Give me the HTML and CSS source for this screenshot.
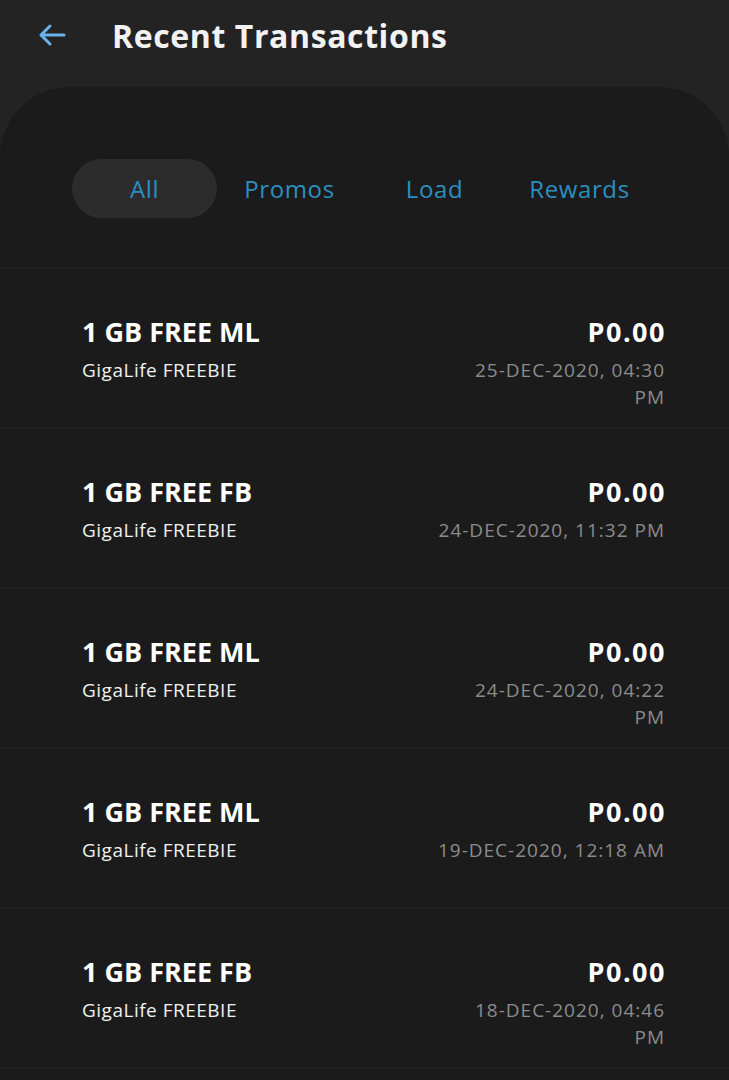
FILE: index.html
```html
<!DOCTYPE html>
<html lang="en">
<head>
    <meta charset="UTF-8">
    <meta name="viewport" content="width=device-width, initial-scale=1.0">
    <title>Recent Transactions</title>
    <link rel="stylesheet" href="styles.css">
</head>
<body>
    <header class="top-bar">
        <button class="back-btn" aria-label="Back">
            <svg width="30" height="24" viewBox="0 0 30 24">
                <path d="M27 12H4M13 3L4 12l9 9" fill="none" stroke="#6cb2ec" stroke-width="3" stroke-linecap="round" stroke-linejoin="round"/>
            </svg>
        </button>
        <h1>Recent Transactions</h1>
    </header>

    <main class="card">
        <nav class="tabs">
            <span class="tab active">All</span>
            <span class="tab">Promos</span>
            <span class="tab">Load</span>
            <span class="tab">Rewards</span>
        </nav>

        <ul class="tx-list">
            <li class="tx">
                <div class="tx-left">
                    <div class="tx-name">1 GB FREE ML</div>
                    <div class="tx-sub">GigaLife FREEBIE</div>
                </div>
                <div class="tx-right">
                    <div class="tx-amount">P0.00</div>
                    <div class="tx-date">25-DEC-2020, 04:30<br>PM</div>
                </div>
            </li>
            <li class="tx">
                <div class="tx-left">
                    <div class="tx-name">1 GB FREE FB</div>
                    <div class="tx-sub">GigaLife FREEBIE</div>
                </div>
                <div class="tx-right">
                    <div class="tx-amount">P0.00</div>
                    <div class="tx-date">24-DEC-2020, 11:32 PM</div>
                </div>
            </li>
            <li class="tx">
                <div class="tx-left">
                    <div class="tx-name">1 GB FREE ML</div>
                    <div class="tx-sub">GigaLife FREEBIE</div>
                </div>
                <div class="tx-right">
                    <div class="tx-amount">P0.00</div>
                    <div class="tx-date">24-DEC-2020, 04:22<br>PM</div>
                </div>
            </li>
            <li class="tx">
                <div class="tx-left">
                    <div class="tx-name">1 GB FREE ML</div>
                    <div class="tx-sub">GigaLife FREEBIE</div>
                </div>
                <div class="tx-right">
                    <div class="tx-amount">P0.00</div>
                    <div class="tx-date">19-DEC-2020, 12:18 AM</div>
                </div>
            </li>
            <li class="tx">
                <div class="tx-left">
                    <div class="tx-name">1 GB FREE FB</div>
                    <div class="tx-sub">GigaLife FREEBIE</div>
                </div>
                <div class="tx-right">
                    <div class="tx-amount">P0.00</div>
                    <div class="tx-date">18-DEC-2020, 04:46<br>PM</div>
                </div>
            </li>
        </ul>
    </main>
</body>
</html>
```

FILE: styles.css
```css
body {
    margin: 0;
    padding: 0;
    background-color: #232323;
    font-family: "Open Sans", "Noto Sans", sans-serif;
    color: #ffffff;
    overflow: hidden;
}
.top-bar {
    display: flex;
    align-items: center;
    height: 70px;
    padding-left: 37px;
}
.back-btn {
    background: none;
    border: none;
    padding: 0;
    width: 30px;
    height: 24px;
    margin-right: 45px;
    cursor: pointer;
}
.back-btn svg {
    display: block;
}
.top-bar h1 {
    margin: 0;
    font-size: 32px;
    font-weight: 700;
    letter-spacing: 0.6px;
    color: #f2f2f2;
}
.card {
    margin-top: 17px;
    background-color: #1b1b1b;
    border-radius: 70px 70px 0 0;
    min-height: 1000px;
}
.tabs {
    display: flex;
    padding: 72px 0 0 72px;
    height: 108px;
    border-bottom: 2px solid #222222;
}
.tab {
    width: 145px;
    height: 59px;
    display: flex;
    align-items: center;
    justify-content: center;
    border-radius: 30px;
    font-size: 24px;
    font-weight: 500;
    letter-spacing: 0.6px;
    color: #2b8fc2;
}
.tab.active {
    background-color: #2c2c2c;
}
.tx-list {
    list-style: none;
    margin: 0;
    padding: 0;
}
.tx {
    display: flex;
    justify-content: space-between;
    height: 112px;
    padding: 46px 64px 0 82px;
    border-bottom: 2px solid #222222;
}
.tx-name, .tx-amount {
    font-size: 27px;
    font-weight: 700;
    line-height: 34px;
    color: #ffffff;
}
.tx-amount {
    letter-spacing: 1.5px;
    margin-right: -1px;
}
.tx-sub {
    margin-top: 8px;
    font-size: 19px;
    font-weight: 500;
    letter-spacing: 0.5px;
    color: #f0f0f0;
}
.tx-right {
    text-align: right;
}
.tx-date {
    margin-top: 8px;
    font-size: 19px;
    line-height: 27px;
    letter-spacing: 1px;
    color: #8c8c8c;
}
```
